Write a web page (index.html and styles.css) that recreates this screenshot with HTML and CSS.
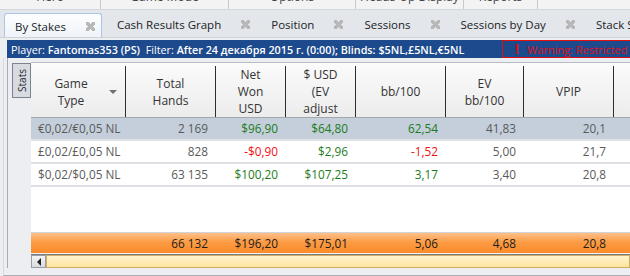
FILE: index.html
```html
<!DOCTYPE html>
<html lang="en">
<head>
    <meta charset="UTF-8">
    <title>By Stakes</title>
    <link rel="stylesheet" href="styles.css">
</head>
<body>
    <div class="menu">
        <span class="menu-item m-hero">Hero</span>
        <span class="menu-item m-game">Game Mode</span>
        <span class="menu-item m-options">Options</span>
        <span class="menu-item m-hud">Heads-Up Display</span>
        <span class="menu-item m-reports">Reports</span>
    </div>

    <div class="tabs">
        <div class="tab active"><span class="tab-label">By Stakes</span><span class="tab-close"></span></div>
        <div class="tab"><span class="tab-label">Cash Results Graph</span><span class="tab-close"></span></div>
        <div class="tab"><span class="tab-label">Position</span><span class="tab-close"></span></div>
        <div class="tab"><span class="tab-label">Sessions</span><span class="tab-close"></span></div>
        <div class="tab"><span class="tab-label">Sessions by Day</span><span class="tab-close"></span></div>
        <div class="tab"><span class="tab-label">Stack Sizes</span><span class="tab-close"></span></div>
    </div>

    <div class="infobar">
        <span class="info">Player: <b>Fantomas353 (PS)</b>&nbsp; Filter: <b>After 24 декабря 2015 г. (0:00); Blinds: $5NL,£5NL,€5NL</b></span>
        <div class="warning"><span class="warn-mark">!</span>Warning: Restricted</div>
    </div>

    <div class="main">
        <div class="side">
            <div class="stats-btn"><span>Stats</span></div>
        </div>
        <div class="grid">
            <div class="head">
                <div class="hcell first"><span class="hlabel">Game<br>Type</span><span class="sort"></span></div>
                <div class="hcell">Total<br>Hands</div>
                <div class="hcell">Net<br>Won<br>USD</div>
                <div class="hcell">$ USD<br>(EV<br>adjust</div>
                <div class="hcell">bb/100</div>
                <div class="hcell">EV<br>bb/100</div>
                <div class="hcell">VPIP</div>
                <div class="hcell last"></div>
            </div>

            <div class="row selected">
                <div class="cell name">€0,02/€0,05 NL</div>
                <div class="cell">2 169</div>
                <div class="cell pos">$96,90</div>
                <div class="cell pos">$64,80</div>
                <div class="cell pos">62,54</div>
                <div class="cell">41,83</div>
                <div class="cell">20,1</div>
                <div class="cell"></div>
            </div>
            <div class="row">
                <div class="cell name">£0,02/£0,05 NL</div>
                <div class="cell">828</div>
                <div class="cell neg">-$0,90</div>
                <div class="cell pos">$2,96</div>
                <div class="cell neg">-1,52</div>
                <div class="cell">5,00</div>
                <div class="cell">21,7</div>
                <div class="cell"></div>
            </div>
            <div class="row">
                <div class="cell name">$0,02/$0,05 NL</div>
                <div class="cell">63 135</div>
                <div class="cell pos">$100,20</div>
                <div class="cell pos">$107,25</div>
                <div class="cell pos">3,17</div>
                <div class="cell">3,40</div>
                <div class="cell">20,8</div>
                <div class="cell"></div>
            </div>

            <div class="blank"></div>

            <div class="row total">
                <div class="cell name"></div>
                <div class="cell">66 132</div>
                <div class="cell">$196,20</div>
                <div class="cell">$175,01</div>
                <div class="cell">5,06</div>
                <div class="cell">4,68</div>
                <div class="cell">20,8</div>
                <div class="cell"></div>
            </div>

            <div class="hscroll">
                <div class="scroll-btn"><span class="arrow-left"></span></div>
                <div class="scroll-thumb"></div>
            </div>
        </div>
    </div>
    <div class="footer"></div>
</body>
</html>
```

FILE: styles.css
```css
* {
    margin: 0;
    padding: 0;
    box-sizing: border-box;
}

body {
    width: 630px;
    height: 276px;
    overflow: hidden;
    font-family: 'Open Sans', 'Noto Sans', sans-serif;
    font-size: 11px;
    color: #333;
    background: #eceef1;
}

/* menu strip, mostly scrolled off the top */
.menu {
    height: 10px;
    overflow: hidden;
    display: flex;
    background: #f3f3f3;
    border-bottom: 1px solid #d3d7dc;
}

.menu-item {
    line-height: 14px;
    margin-top: -10px;
    font-size: 12px;
    color: #444;
    border-right: 1px solid #c9c9c9;
    height: 24px;
    text-align: center;
}

.m-hero { width: 101px; }
.m-game { width: 128px; }
.m-options { width: 127px; }
.m-hud { width: 108px; }
.m-reports { width: 74px; }

/* tabs */
.tabs {
    height: 28px;
    display: flex;
    align-items: flex-end;
    padding-left: 4px;
    background: #e3e7ec;
    border-bottom: 1px solid #cdd3da;
    white-space: nowrap;
    overflow: hidden;
}

.tab {
    height: 26px;
    display: flex;
    align-items: center;
    gap: 20px;
    padding: 0 6px 0 15px;
    color: #222;
    font-size: 11.5px;
}

.tab.active {
    padding-left: 10px;
    background: linear-gradient(#fdfeff, #eef3f9);
    border: 1px solid #a9c6e6;
    border-bottom: none;
    border-radius: 3px 3px 0 0;
    margin-bottom: -1px;
    height: 25px;
}

.tab-close {
    width: 9px;
    height: 9px;
    flex: none;
    background:
        linear-gradient(45deg, transparent 36%, #b8b8b8 36%, #b8b8b8 64%, transparent 64%),
        linear-gradient(-45deg, transparent 36%, #b8b8b8 36%, #b8b8b8 64%, transparent 64%);
}

/* blue filter bar */
.infobar {
    margin: 2px 0 0 7px;
    height: 18px;
    display: flex;
    align-items: center;
    background: #1d4a8d;
    color: #fff;
    white-space: nowrap;
    overflow: hidden;
}

.info {
    flex: none;
    padding-left: 4px;
    width: 495px;
    font-size: 10.8px;
}

.info b {
    font-weight: 600;
}

.warning {
    flex: none;
    width: 140px;
    height: 18px;
    border: 1px solid #e01010;
    color: #e01010;
    font-size: 11px;
    line-height: 16px;
    padding-left: 12px;
}

.warn-mark {
    font-weight: 700;
    font-size: 14px;
    margin-right: 8px;
}

/* main area */
.main {
    height: 210px;
    display: flex;
    margin-left: 3px;
    border-left: 1px solid #d6d9de;
}

.side {
    width: 24px;
    margin-left: 3px;
    border-left: 1px solid #a9adb3;
    padding: 5px 0 0 4px;
}

.stats-btn {
    width: 19px;
    height: 35px;
    background: #d8dce2;
    border: 1px solid #7d838c;
    display: flex;
    align-items: center;
    justify-content: center;
}

.stats-btn span {
    writing-mode: vertical-rl;
    transform: rotate(180deg);
    font-size: 10px;
    color: #222;
}

.grid {
    flex: 1;
    padding-top: 4px;
    display: flex;
    flex-direction: column;
    background: #fff;
    background-clip: content-box;
    overflow: hidden;
}

.head,
.row {
    display: grid;
    grid-template-columns: 95px 90px 70px 70px 90px 78px 90px 60px;
}

.head {
    height: 56px;
    background: linear-gradient(#fbfbfb, #ececec);
    border-top: 1px solid #b9bcc0;
    border-bottom: 1px solid #a3a6aa;
}

.hcell {
    margin: 3px 0 1px;
    border-right: 1px solid #2e2e2e;
    display: flex;
    align-items: center;
    justify-content: center;
    text-align: center;
    line-height: 17px;
    font-size: 12px;
    color: #333;
}

.hcell.last {
    border-right: none;
}

.hcell.first {
    justify-content: flex-start;
    padding-left: 6px;
}

.hlabel {
    flex: 1;
}

.sort {
    width: 0;
    height: 0;
    margin: 0 8px 0 4px;
    border-left: 4px solid transparent;
    border-right: 4px solid transparent;
    border-top: 4px solid #707070;
}

.row {
    height: 23px;
    border-bottom: 2px solid #dde1e6;
    line-height: 21px;
    color: #5a5a5a;
    font-size: 11.8px;
}

.row.selected {
    background: #c4cfdb;
}

.cell {
    text-align: right;
    padding-right: 8px;
    white-space: nowrap;
    overflow: hidden;
}

.cell.name {
    text-align: left;
    padding: 0 0 0 7px;
}

.pos {
    color: #1c7c1c;
}

.neg {
    color: #f01010;
}

.blank {
    height: 46px;
    border-bottom: 1px solid #d0d3d8;
}

.row.total {
    height: 21px;
    line-height: 20px;
    border-bottom: 1px solid #f3f3f3;
    background: linear-gradient(#fdc08a, #fc9c45 45%, #fa8b2a);
    color: #1c1c1c;
}

.hscroll {
    height: 14px;
    display: flex;
    border-top: 1px solid #7a7d82;
    background: #e9eaec;
}

.scroll-btn {
    width: 15px;
    border: 1px solid #9a9ea4;
    background: linear-gradient(#f4f4f4, #d9dbde);
    display: flex;
    align-items: center;
    justify-content: center;
}

.arrow-left {
    width: 0;
    height: 0;
    border-top: 4px solid transparent;
    border-bottom: 4px solid transparent;
    border-right: 4px solid #222;
}

.scroll-thumb {
    flex: 1;
    border: 1px solid #cfae64;
    background: linear-gradient(#fff4cf, #fde49f);
}

.footer {
    height: 8px;
    margin-left: 3px;
    border-left: 1px solid #d6d9de;
    border-bottom: 1px solid #a9adb3;
    background: #eceef1;
}
```
